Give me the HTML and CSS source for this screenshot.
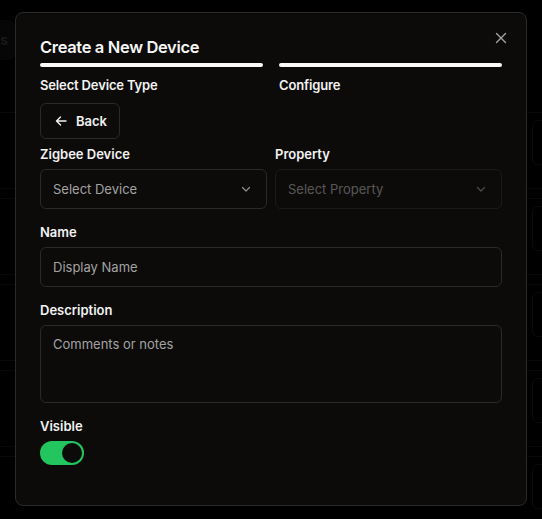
FILE: index.html
```html
<!DOCTYPE html>
<html lang="en">
<head>
<meta charset="utf-8">
<title>Devices</title>
<link rel="stylesheet" href="styles.css">
</head>
<body>
  <!-- page behind the dialog -->
  <div class="page">
    <div class="tabs">
      <div class="tab">Devices</div>
    </div>
    <div class="rows">
      <div class="row"><span class="row-btn"></span></div>
      <div class="row"><span class="row-btn"></span></div>
      <div class="row"><span class="row-btn"></span></div>
      <div class="row"><span class="row-btn"></span></div>
      <div class="row"><span class="row-btn"></span></div>
    </div>
  </div>

  <div class="backdrop">
    <div class="dialog" role="dialog" aria-labelledby="dlg-title">
      <button class="close" aria-label="Close">
        <svg width="12" height="12" viewBox="0 0 12 12"><path d="M1.5 1.5l9 9M10.5 1.5l-9 9" stroke="currentColor" stroke-width="1.4" stroke-linecap="round"/></svg>
      </button>
      <h2 id="dlg-title" class="title">Create a New Device</h2>

      <div class="steps">
        <div class="step"><div class="bar"></div><div class="step-label">Select Device Type</div></div>
        <div class="step"><div class="bar"></div><div class="step-label">Configure</div></div>
      </div>

      <button class="back">
        <svg width="14" height="14" viewBox="0 0 14 14"><path d="M12 7H2.5M6.5 3L2.5 7l4 4" fill="none" stroke="currentColor" stroke-width="1.4" stroke-linecap="round" stroke-linejoin="round"/></svg>
        <span>Back</span>
      </button>

      <div class="grid">
        <div class="field">
          <label class="label">Zigbee Device</label>
          <div class="select">
            <span>Select Device</span>
            <svg width="12" height="12" viewBox="0 0 12 12"><path d="M2.5 4.5L6 8l3.5-3.5" fill="none" stroke="currentColor" stroke-width="1.3" stroke-linecap="round" stroke-linejoin="round"/></svg>
          </div>
        </div>
        <div class="field">
          <label class="label">Property</label>
          <div class="select disabled">
            <span>Select Property</span>
            <svg width="12" height="12" viewBox="0 0 12 12"><path d="M2.5 4.5L6 8l3.5-3.5" fill="none" stroke="currentColor" stroke-width="1.3" stroke-linecap="round" stroke-linejoin="round"/></svg>
          </div>
        </div>
      </div>

      <div class="field gap">
        <label class="label">Name</label>
        <div class="input">Display Name</div>
      </div>

      <div class="field gap">
        <label class="label">Description</label>
        <div class="input area">Comments or notes</div>
      </div>

      <div class="field gap">
        <label class="label">Visible</label>
        <div class="switch"><span class="knob"></span></div>
      </div>
    </div>
  </div>
</body>
</html>
```

FILE: styles.css
```css
* { box-sizing: border-box; }

html, body {
  margin: 0;
  height: 100%;
}

body {
  background: #000;
  font-family: "Inter", "Liberation Sans", sans-serif;
  color: #f2f2f2;
  overflow: hidden;
  position: relative;
}

/* ---- page behind the dialog ---- */
.page {
  padding-top: 20px;
}

.tabs {
  display: flex;
  margin-left: -52px;
}

.tab {
  width: 67px;
  height: 40px;
  background: #0f0f0f;
  border-radius: 6px;
  color: #3a3a3a;
  font-size: 14px;
  font-weight: 600;
  line-height: 40px;
  text-align: right;
  padding-right: 7px;
}

.rows {
  margin-top: 52px;
  display: flex;
  flex-direction: column;
  gap: 9px;
}

.row {
  height: 77px;
  border-top: 1px solid #141414;
  border-bottom: 1px solid #141414;
  display: flex;
  justify-content: flex-end;
  align-items: flex-start;
  padding-top: 7px;
  margin-right: -40px;
}

.row-btn {
  width: 50px;
  height: 45px;
  border: 1px solid #1a1a1a;
  border-radius: 6px;
}

/* ---- dialog ---- */
.backdrop {
  position: absolute;
  inset: 0;
  background: rgba(0, 0, 0, 0.55);
}

.dialog {
  position: absolute;
  left: 15px;
  top: 12px;
  width: 512px;
  height: 494px;
  background: #0c0b0a;
  border: 1px solid #2b2a29;
  border-radius: 8px;
  padding: 23px 24px 24px;
  display: flex;
  flex-direction: column;
}

.close {
  position: absolute;
  right: 18px;
  top: 18px;
  width: 14px;
  height: 14px;
  padding: 0;
  border: 0;
  background: none;
  color: #a3a3a3;
  display: flex;
  align-items: center;
  justify-content: center;
}

.title {
  margin: 0;
  font-size: 16.5px;
  font-weight: 600;
  line-height: 22px;
  letter-spacing: -0.35px;
  color: #f5f5f5;
}

.steps {
  margin-top: 5px;
  display: grid;
  grid-template-columns: 1fr 1fr;
  gap: 16px;
}

.bar {
  height: 4px;
  border-radius: 2px;
  background: #fafafa;
}

.step-label {
  margin-top: 9px;
  font-size: 13px;
  font-weight: 600;
  line-height: 18px;
  letter-spacing: -0.15px;
}

.back {
  margin-top: 9px;
  align-self: flex-start;
  height: 36px;
  width: 80px;
  display: flex;
  align-items: center;
  gap: 8px;
  padding: 0 0 0 13px;
  background: transparent;
  border: 1px solid #2b2a29;
  border-radius: 6px;
  color: #f2f2f2;
  font-family: inherit;
  font-size: 13px;
  font-weight: 600;
}

.grid {
  margin-top: 6px;
  display: grid;
  grid-template-columns: 1fr 1fr;
  gap: 8px;
}

.field {
  display: flex;
  flex-direction: column;
  gap: 6px;
}

.field.gap {
  margin-top: 14px;
}

.label {
  font-size: 13px;
  font-weight: 600;
  line-height: 18px;
}

.select,
.input {
  height: 40px;
  border: 1px solid #2b2a29;
  border-radius: 6px;
  padding: 0 12px;
  display: flex;
  align-items: center;
  justify-content: space-between;
  font-size: 13px;
  color: #a3a3a3;
}

.select svg {
  color: #8a8a8a;
  margin-right: 2px;
}

.select.disabled {
  opacity: 0.5;
}

.input.area {
  height: 78px;
  align-items: flex-start;
  padding-top: 8px;
  line-height: 20px;
}

.switch {
  width: 44px;
  height: 24px;
  border-radius: 12px;
  background: #22c55e;
  padding: 2px;
  display: flex;
  justify-content: flex-end;
}

.knob {
  width: 20px;
  height: 20px;
  border-radius: 50%;
  background: #0c0b0a;
}
```
